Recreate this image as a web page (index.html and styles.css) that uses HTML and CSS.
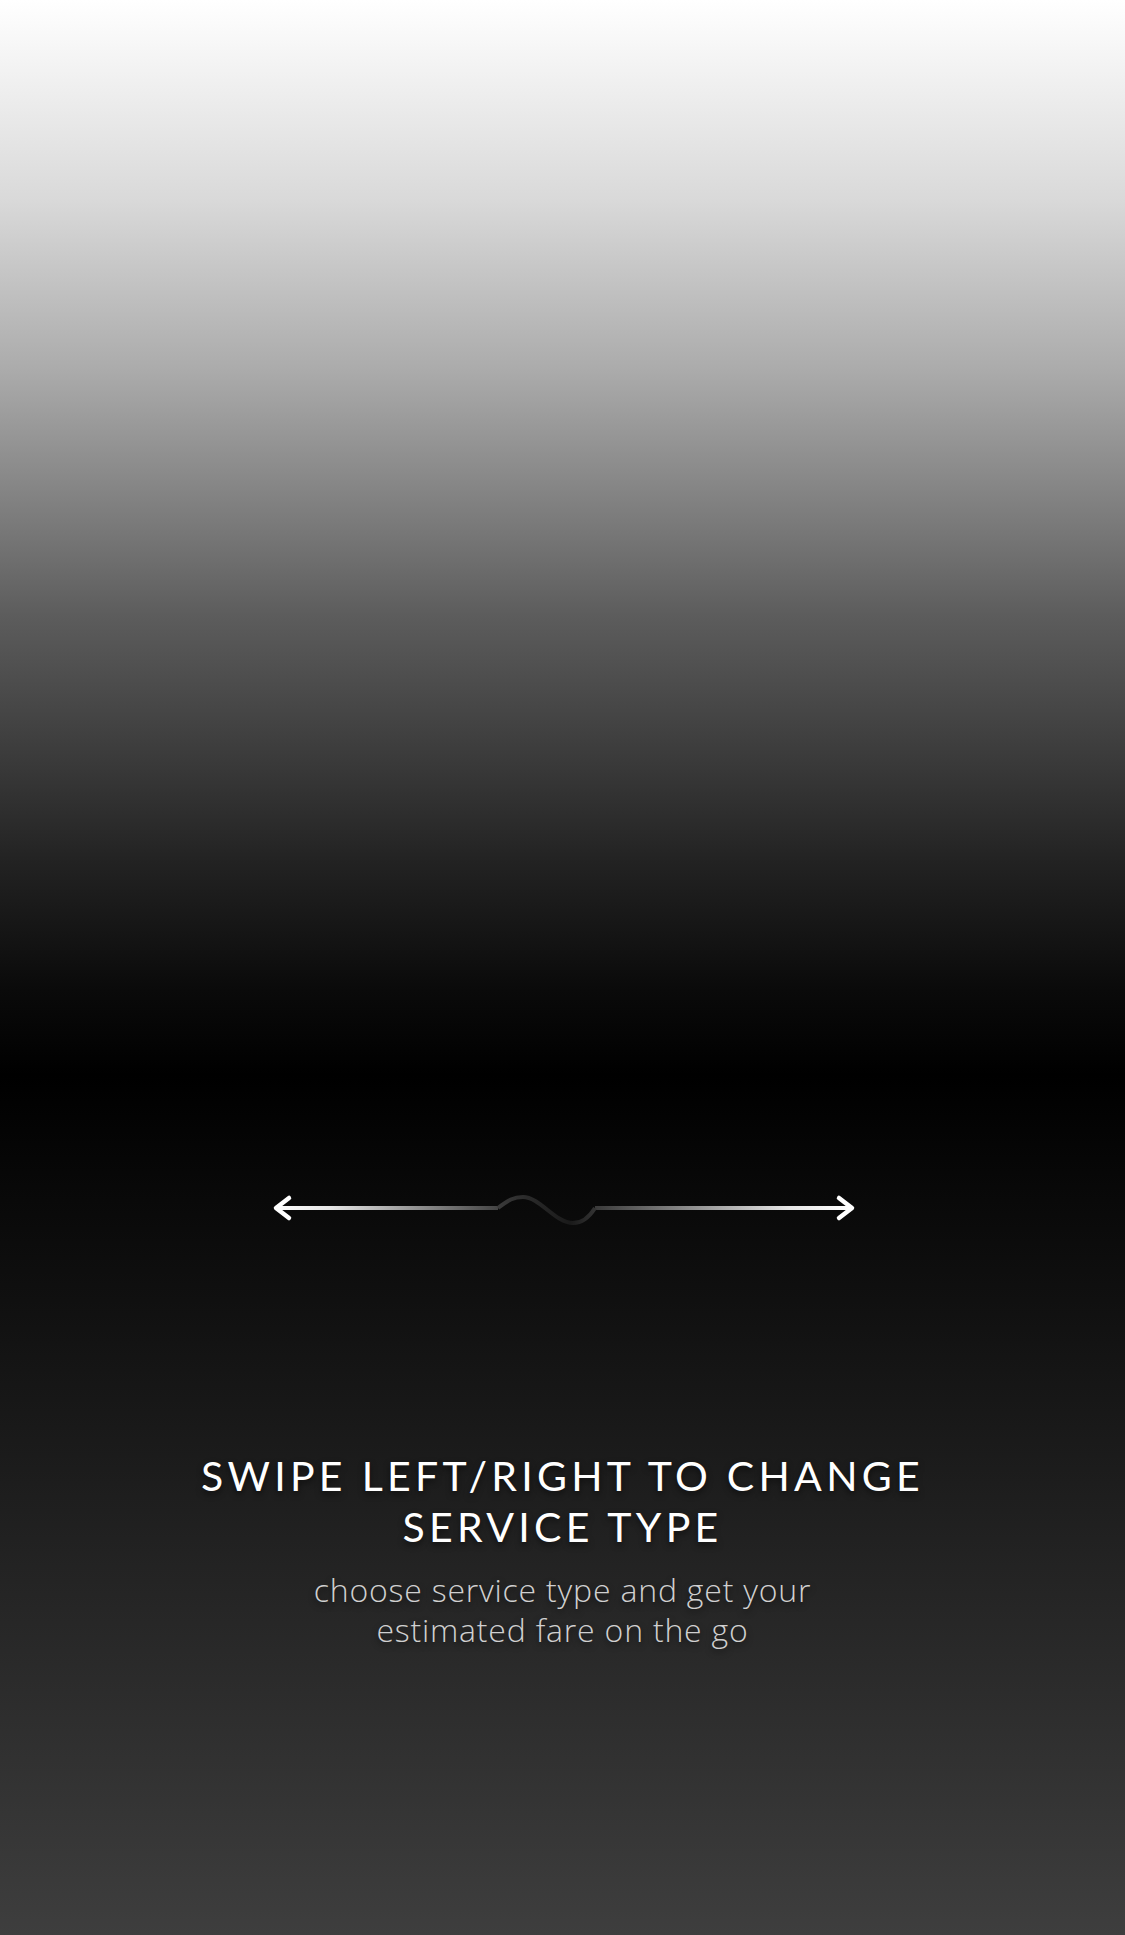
FILE: index.html
```html
<!DOCTYPE html>
<html lang="en">
<head>
<meta charset="utf-8">
<title>Swipe to change service type</title>
<link rel="stylesheet" href="styles.css">
</head>
<body>
<main class="screen">
  <svg class="swipe" viewBox="0 0 1125 60" width="1125" height="60" aria-hidden="true">
    <defs>
      <linearGradient id="gl" gradientUnits="userSpaceOnUse" x1="274" y1="0" x2="498" y2="0">
        <stop offset="0" stop-color="#ffffff"/>
        <stop offset="0.25" stop-color="#e6e6e6"/>
        <stop offset="1" stop-color="#444444"/>
      </linearGradient>
      <linearGradient id="gr" gradientUnits="userSpaceOnUse" x1="595" y1="0" x2="854" y2="0">
        <stop offset="0" stop-color="#3a3a3a"/>
        <stop offset="0.75" stop-color="#e6e6e6"/>
        <stop offset="1" stop-color="#ffffff"/>
      </linearGradient>
      <linearGradient id="gw" gradientUnits="userSpaceOnUse" x1="498" y1="0" x2="595" y2="0">
        <stop offset="0" stop-color="#3a3a3a"/>
        <stop offset="0.3" stop-color="#2a2a2a"/>
        <stop offset="0.75" stop-color="#1a1a1a"/>
        <stop offset="1" stop-color="#333333"/>
      </linearGradient>
    </defs>
    <path d="M276 30 H498" stroke="url(#gl)" stroke-width="4" fill="none"/>
    <path d="M595 30 H852" stroke="url(#gr)" stroke-width="4" fill="none"/>
    <path d="M498 30 C508 22 514 19 523 19 C540 19 555 45 573 45 C583 45 590 38 595 30" stroke="url(#gw)" stroke-width="4" fill="none"/>
    <path d="M289 20 L276 30 L289 40" stroke="#ffffff" stroke-width="4.5" stroke-linecap="round" stroke-linejoin="round" fill="none"/>
    <path d="M839 20 L852 30 L839 40" stroke="#ffffff" stroke-width="4.5" stroke-linecap="round" stroke-linejoin="round" fill="none"/>
  </svg>
  <h1 class="title">SWIPE LEFT/RIGHT TO CHANGE<br>SERVICE TYPE</h1>
  <p class="subtitle">choose service type and get your<br>estimated fare on the go</p>
</main>
</body>
</html>
```

FILE: styles.css
```css
html, body {
  margin: 0;
  padding: 0;
}

body {
  width: 1125px;
  height: 1935px;
  overflow: hidden;
  font-family: "Lato", "Open Sans", sans-serif;
}

.screen {
  height: 1935px;
  box-sizing: border-box;
  padding-top: 1178px;
  display: flex;
  flex-direction: column;
  align-items: center;
  background: linear-gradient(to bottom,
    #ffffff 0px,
    #f4f4f4 60px,
    #d9d9d9 200px,
    #ababab 370px,
    #5c5c5c 617px,
    #222222 863px,
    #0a0a0a 990px,
    #000000 1075px,
    #090909 1200px,
    #141414 1357px,
    #2a2a2a 1665px,
    #3e3e3e 1935px);
}

.swipe {
  display: block;
  flex: none;
}

.title {
  margin: 212px 0 0;
  font-size: 41px;
  font-weight: 400;
  line-height: 51px;
  letter-spacing: 4.3px;
  color: #ffffff;
  text-align: center;
  text-shadow: 0 3px 6px rgba(0, 0, 0, 0.55);
}

.subtitle {
  margin: 18px 0 0;
  font-family: "Open Sans", "Lato", sans-serif;
  font-size: 32px;
  font-weight: 300;
  line-height: 39.5px;
  letter-spacing: 0.8px;
  color: #d0d0d0;
  text-align: center;
  text-shadow: 0 3px 6px rgba(0, 0, 0, 0.55);
}
```
